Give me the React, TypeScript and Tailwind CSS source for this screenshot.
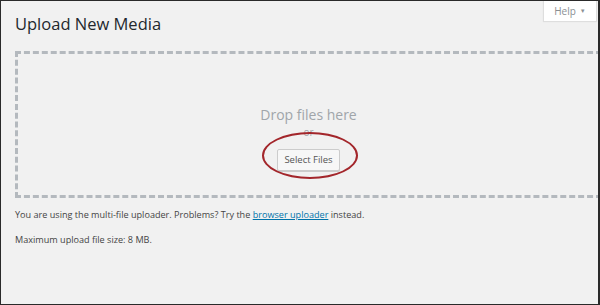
export default function App() {
  return (
    <div
      className="relative h-[305px] w-[600px] overflow-hidden border border-r-2 border-[#2a2a2a] bg-[#f1f1f1] text-[#444]"
      style={{ fontFamily: '"Open Sans", "Noto Sans", sans-serif' }}
    >
      {/* Help tab */}
      <div className="absolute right-[2px] top-0 flex h-[20px] w-[52px] items-center justify-center gap-1 bg-white text-[10px] text-[#8a8f94] shadow-[0_0_1px_1px_rgba(0,0,0,0.08)]">
        <span>Help</span>
        <span className="text-[6px]">▼</span>
      </div>

      <div className="pl-[14px] pt-[12px]">
        <h1 className="text-[16.5px] leading-[22px] text-[#23282d]">Upload New Media</h1>

        <div className="mt-[16px] -mr-[4px] flex h-[147px] flex-col items-center border-[3px] border-dashed border-[#b4b9be] pt-[51px]">
          <p className="text-[14px] leading-[20px] text-[#a0a5aa]">Drop files here</p>
          <p className="mt-[1px] text-[10px] leading-[12px] text-[#a0a5aa]">or</p>
          <div className="relative mt-[7px]">
            <button className="rounded-[2px] border border-[#cccccc] bg-[#f7f7f7] px-[6px] py-[3px] text-[9.5px] leading-[14px] text-[#555] shadow-[0_1px_0_#ccc]">
              Select Files
            </button>
            <div className="pointer-events-none absolute left-[-15px] top-[-13px] h-[47px] w-[96px] rounded-[50%] border-2 border-[#a3262b]" />
          </div>
        </div>

        <p className="mt-[10px] text-[9.1px] leading-[14px]">
          You are using the multi-file uploader. Problems? Try the{' '}
          <a href="#" className="text-[#0073aa] underline">browser uploader</a> instead.
        </p>
        <p className="mt-[11px] text-[9.1px] leading-[14px]">Maximum upload file size: 8 MB.</p>
      </div>
    </div>
  )
}
